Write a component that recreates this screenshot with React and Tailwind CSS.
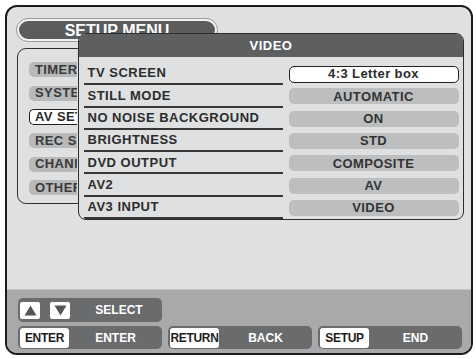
import React from "react";

const font = { fontFamily: '"Liberation Sans", Arial, sans-serif' };

const rows = [
  ["TV SCREEN", "4:3 Letter box", true],
  ["STILL MODE", "AUTOMATIC"],
  ["NO NOISE BACKGROUND", "ON"],
  ["BRIGHTNESS", "STD"],
  ["DVD OUTPUT", "COMPOSITE"],
  ["AV2", "AV"],
  ["AV3 INPUT", "VIDEO"],
];

const menu = ["TIMER", "SYSTEM", "AV SETUP", "REC SETUP", "CHANNEL", "OTHERS"];

function Key({ children, w = "w-[49px]" }) {
  return (
    <div className={`${w} h-[20px] bg-white rounded-[3px] flex items-center justify-center text-[12px] font-bold text-[#1e1e1e] tracking-[-0.3px] overflow-hidden`}>
      {children}
    </div>
  );
}

export default function App() {
  return (
    <div className="w-[476px] h-[359px] bg-white pl-[5px] pt-[5px]" style={font}>
      <div className="relative w-[468px] h-[350px] border-2 border-[#1c1c1c] rounded-[12px] bg-[#dfe0e2] flex flex-col overflow-hidden">
        {/* top area */}
        <div className="h-[282px] pl-[10px] pt-[12px] flex flex-col">
          <div className="w-[200px] h-[22px] rounded-full bg-[#5b5c5e] border-2 border-[#f4f4f4] outline outline-1 outline-[#9a9a9a] flex items-center justify-center">
            <span className="text-white font-bold text-[16px] leading-none mt-[2px]">SETUP MENU</span>
          </div>
          <div className="mt-[7px] w-[190px] h-[156px] border-[1.5px] border-[#2e2e2e] rounded-[9px] pt-[13px] pl-[11px] flex flex-col gap-[8.5px]">
            {menu.map((m, i) => (
              <div
                key={m}
                className={
                  i === 2
                    ? "w-[48px] h-[16px] -mt-[0.5px] bg-white border-[1.5px] border-r-0 border-[#1e1e1e] rounded-l-[5px] pl-[5px] flex items-center overflow-hidden whitespace-nowrap text-[13px] font-bold text-[#2a2a2a] tracking-[0.4px]"
                    : "w-[48px] h-[15px] bg-[#b8b9bb] rounded-l-[5px] pl-[6px] flex items-center overflow-hidden whitespace-nowrap text-[13px] font-bold text-[#3a3a3a] tracking-[0.4px]"
                }
              >
                {m}
              </div>
            ))}
          </div>
        </div>

        {/* bottom band */}
        <div className="flex-1 bg-[#a8a9ab] border-t border-[#c4c5c7] pl-[11px] pt-[8px] flex flex-col gap-[4px]">
          <div className="w-[144px] h-[24px] bg-[#6a6b6d] rounded-[5px] flex items-center pl-[2px]">
            <div className="w-[20px] h-[17px] bg-white rounded-[2px] flex items-center justify-center">
              <svg width="13" height="11" viewBox="0 0 13 11"><path d="M6.5 0.5 L12.5 10.5 L0.5 10.5 Z" fill="#555658" /></svg>
            </div>
            <div className="ml-[10px] w-[20px] h-[17px] bg-white rounded-[2px] flex items-center justify-center">
              <svg width="13" height="11" viewBox="0 0 13 11"><path d="M0.5 0.5 L12.5 0.5 L6.5 10.5 Z" fill="#555658" /></svg>
            </div>
            <div className="flex-1 pl-[6px] text-center text-white font-bold text-[12px]">SELECT</div>
          </div>
          <div className="flex gap-[6px]">
            {[
              ["ENTER", "ENTER"],
              ["RETURN", "BACK"],
              ["SETUP", "END"],
            ].map(([k, l]) => (
              <div key={k} className="w-[144px] h-[23px] bg-[#6a6b6d] rounded-[5px] flex items-center pl-[2px]">
                <Key>{k}</Key>
                <div className="flex-1 text-center text-white font-bold text-[12px]">{l}</div>
              </div>
            ))}
          </div>
        </div>

        {/* VIDEO popup */}
        <div className="absolute left-[71px] top-[26px] w-[386px] h-[187px] bg-[#dfe0e2] border-[1.5px] border-[#2e2e2e] rounded-[8px] overflow-hidden flex flex-col">
          <div className="h-[23px] bg-[#5e5f61] flex items-center justify-center text-white font-bold text-[13px] tracking-[0.5px]">
            VIDEO
          </div>
          <div className="pt-[6px] pl-[4.5px] pr-[4.5px] flex flex-col">
            {rows.map(([label, value, sel]) => (
              <div key={label} className="h-[22.3px] flex items-center">
                <div className="w-[199px] h-full border-b-2 border-[#363636] pl-[4px] flex items-center text-[13px] font-bold text-[#2c2c2c] tracking-[0.5px] whitespace-nowrap">
                  {label}
                </div>
                <div
                  className={
                    sel
                      ? "ml-[6px] flex-1 h-[17px] bg-white border-[1.5px] border-[#222] rounded-[5px] flex items-center justify-center text-[13px] font-bold text-[#2c2c2c] tracking-[0.4px]"
                      : "ml-[6px] flex-1 h-[16px] bg-[#bdbec0] rounded-[5px] flex items-center justify-center text-[13px] font-bold text-[#333] tracking-[0.4px]"
                  }
                >
                  {value}
                </div>
              </div>
            ))}
          </div>
        </div>
      </div>
    </div>
  );
}
